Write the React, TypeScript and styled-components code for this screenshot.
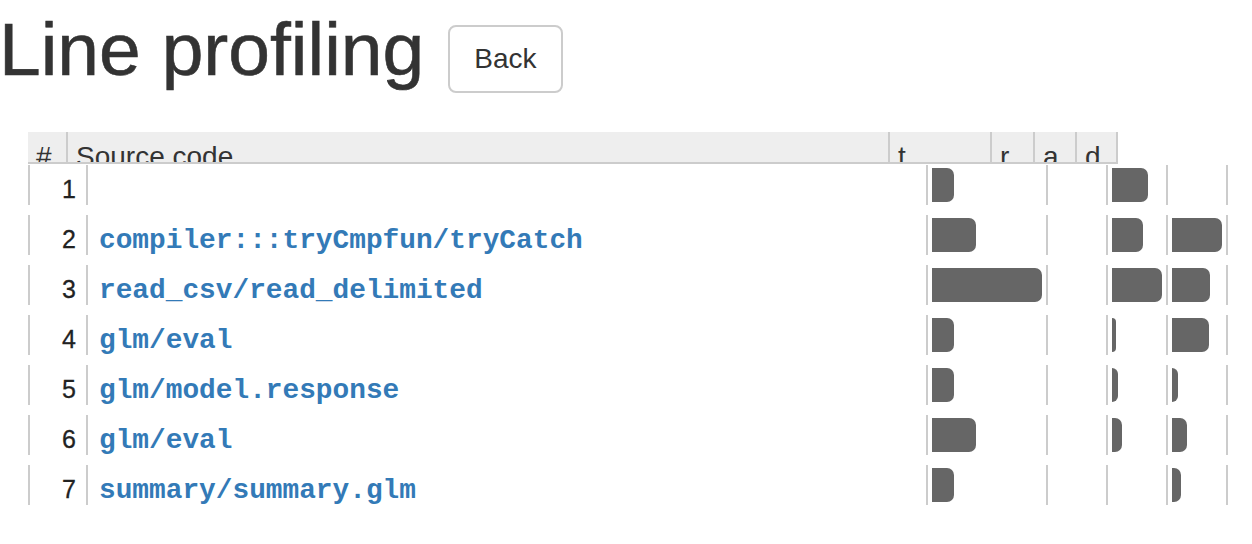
import React from "react";
import styled, { createGlobalStyle } from "styled-components";

const GlobalStyle = createGlobalStyle`
  html, body {
    margin: 0;
    padding: 0;
    background: #fff;
    color: #333;
    font-family: "Liberation Sans", Arial, sans-serif;
  }
`;

const Page = styled.div`
  width: 1252px;
  height: 544px;
  overflow: hidden;
  padding-top: 10px;
  box-sizing: border-box;
`;

const TitleRow = styled.div`
  display: flex;
  align-items: flex-start;
  gap: 24px;
`;

const Title = styled.h1`
  margin: 0 0 0 -1px;
  font-size: 75px;
  line-height: 79px;
  font-weight: 400;
  color: #333;
  -webkit-text-stroke: 0.6px #333;
`;

const BackButton = styled.button`
  margin-top: 15px;
  padding: 12px 24px;
  font-family: "Liberation Sans", Arial, sans-serif;
  font-size: 28px;
  line-height: 40px;
  color: #333;
  background: #fff;
  border: 2px solid #ccc;
  border-radius: 8px;
  cursor: pointer;
`;

const TableArea = styled.div`
  margin-top: 39px;
  padding-left: 28px;
`;

const HeaderRow = styled.div`
  display: grid;
  grid-template-columns: 40px 822px 102px 43px 42px 41px;
  width: max-content;
  background: #eee;
  border-bottom: 2px solid #ccc;
`;

const HeaderCell = styled.div`
  height: 30px;
  overflow: hidden;
  padding: 5px 0 0 8px;
  box-sizing: border-box;
  border-right: 2px solid #ccc;
  font-size: 28px;
  line-height: 40px;
  color: #333;
  white-space: nowrap;
`;

const Body = styled.div`
  display: flex;
  flex-direction: column;
  gap: 10px;
  padding-top: 1px;
`;

const Row = styled.div`
  display: grid;
  grid-template-columns: 60px 840px 120px 60px 60px 60px;
  height: 40px;
`;

const NumCell = styled.div`
  border-left: 2px solid #ccc;
  border-right: 2px solid #ccc;
  text-align: right;
  padding-right: 10px;
  font-size: 25px;
  line-height: 48px;
  height: 40px;
  color: #222;
  -webkit-text-stroke: 0.3px #222;
`;

const CodeCell = styled.div`
  border-right: 2px solid #ccc;
  padding-left: 11px;
  height: 40px;
  font-family: "Liberation Mono", "DejaVu Sans Mono", monospace;
  font-size: 27.8px;
  line-height: 51px;
  font-weight: 700;
  color: #337ab7;
  white-space: nowrap;
  overflow: hidden;
`;

const BarCell = styled.div`
  border-right: 2px solid #ccc;
  padding: 3px 0 3px 4px;
  height: 40px;
  box-sizing: border-box;
`;

const Bar = styled.div`
  height: 34px;
  background: #666;
  border-radius: 0 7px 7px 0;
`;

type RowData = { n: number; code: string; t: number; r: number; a: number; d: number };

const rows: RowData[] = [
  { n: 1, code: "", t: 22, r: 0, a: 36, d: 0 },
  { n: 2, code: "compiler:::tryCmpfun/tryCatch", t: 44, r: 0, a: 31, d: 50 },
  { n: 3, code: "read_csv/read_delimited", t: 110, r: 0, a: 50, d: 38 },
  { n: 4, code: "glm/eval", t: 22, r: 0, a: 4, d: 37 },
  { n: 5, code: "glm/model.response", t: 22, r: 0, a: 6, d: 6 },
  { n: 6, code: "glm/eval", t: 44, r: 0, a: 10, d: 15 },
  { n: 7, code: "summary/summary.glm", t: 22, r: 0, a: 0, d: 9 },
];

const BarSlot = ({ w }: { w: number }) => (
  <BarCell>{w > 0 ? <Bar style={{ width: w }} /> : null}</BarCell>
);

export default function App() {
  return (
    <>
      <GlobalStyle />
      <Page>
        <TitleRow>
          <Title>Line profiling</Title>
          <BackButton>Back</BackButton>
        </TitleRow>
        <TableArea>
          <HeaderRow>
            <HeaderCell>#</HeaderCell>
            <HeaderCell>Source code</HeaderCell>
            <HeaderCell>t</HeaderCell>
            <HeaderCell>r</HeaderCell>
            <HeaderCell>a</HeaderCell>
            <HeaderCell>d</HeaderCell>
          </HeaderRow>
          <Body>
            {rows.map((r) => (
              <Row key={r.n}>
                <NumCell>{r.n}</NumCell>
                <CodeCell>{r.code}</CodeCell>
                <BarSlot w={r.t} />
                <BarSlot w={r.r} />
                <BarSlot w={r.a} />
                <BarSlot w={r.d} />
              </Row>
            ))}
          </Body>
        </TableArea>
      </Page>
    </>
  );
}
